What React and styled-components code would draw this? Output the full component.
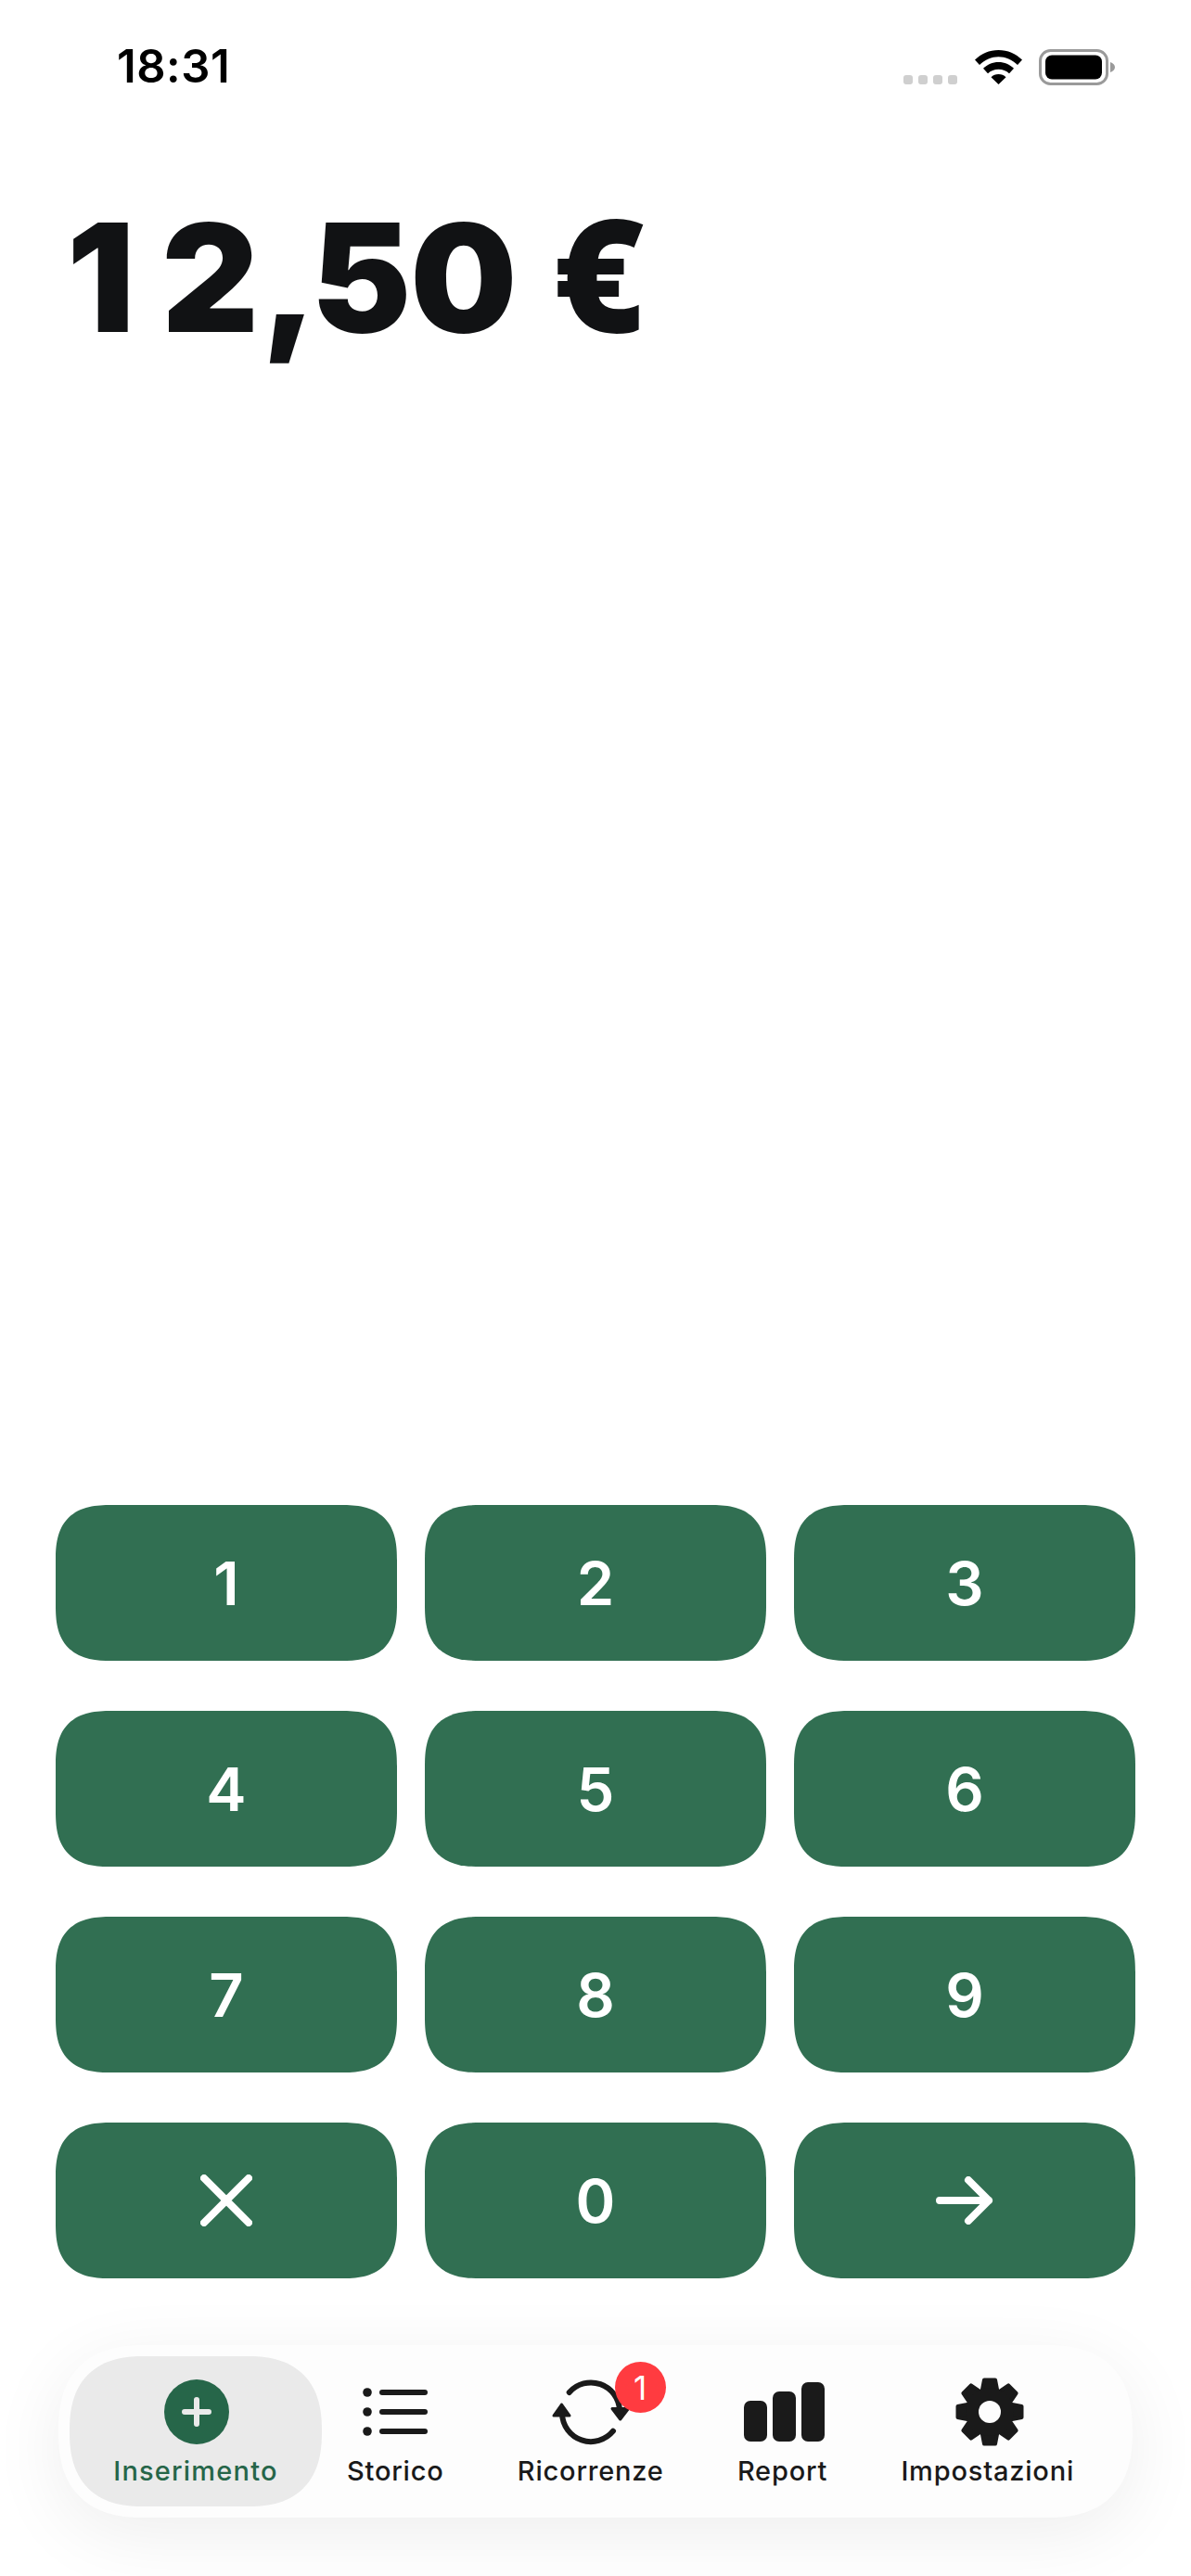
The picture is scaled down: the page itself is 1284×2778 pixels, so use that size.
import React from "react";
import styled, { createGlobalStyle } from "styled-components";

const GREEN = "#316f52";
const DARK = "#1a1a1a";

const GlobalStyle = createGlobalStyle`
  html, body {
    margin: 0;
    padding: 0;
    background: #fff;
    font-family: Inter, "Noto Sans", sans-serif;
    font-optical-sizing: none;
  }
`;

const Screen = styled.div`
  width: 1284px;
  height: 2778px;
  display: flex;
  flex-direction: column;
  overflow: hidden;
  background: #fff;
`;

const StatusBar = styled.div`
  height: 52px;
  padding: 46px 82px 0 126px;
  display: flex;
  align-items: center;
  justify-content: space-between;
`;

const Time = styled.span`
  font-size: 49px;
  font-weight: 600;
  line-height: 44px;
  letter-spacing: 0.5px;
  color: #000;
`;

const StatusIcons = styled.div`
  display: flex;
  align-items: flex-end;
  gap: 18px;
`;

const SignalDots = styled.div`
  display: flex;
  gap: 6px;
  margin-right: 1px;
  margin-bottom: 1px;
`;

const SignalDot = styled.i`
  width: 10px;
  height: 10px;
  border-radius: 3px;
  background: #cfcfcf;
`;

const Amount = styled.div`
  margin-top: 113px;
  padding-left: 72px;
  font-size: 162px;
  font-weight: 900;
  font-variation-settings: "opsz" 14;
  line-height: 164px;
  white-space: pre;
  color: #111214;
`;

const Glyph = styled.span`
  letter-spacing: ${(p) => p.$track}px;
`;

const Euro = styled.span`
  font-family: "Noto Sans", sans-serif;
  font-size: 168px;
  font-variation-settings: normal;
`;

const Keypad = styled.div`
  margin-top: auto;
  padding: 0 60px;
  display: grid;
  grid-template-columns: repeat(3, 368px);
  grid-auto-rows: 168px;
  gap: 54px 30px;
`;

const Key = styled.button`
  border: 0;
  padding: 0;
  border-radius: 50px;
  background: ${GREEN};
  color: #fff;
  font-family: inherit;
  font-optical-sizing: none;
  font-size: 65px;
  font-weight: 600;
  display: flex;
  align-items: center;
  justify-content: center;
  @supports (corner-shape: squircle) {
    border-radius: 60px;
    corner-shape: superellipse(1.4);
  }
`;

const NavBar = styled.nav`
  margin: 72px 63px 63px;
  height: 186px;
  box-sizing: border-box;
  padding: 12px 63px 12px 12px;
  display: flex;
  gap: 27px;
  border-radius: 88px;
  background: #fdfdfd;
  box-shadow: 0 18px 80px rgba(0, 0, 0, 0.07);
  @supports (corner-shape: squircle) {
    border-radius: 93px;
    corner-shape: superellipse(1.3);
  }
`;

const NavRest = styled.div`
  flex: 1;
  display: flex;
  justify-content: space-between;
`;

const NavItem = styled.div`
  position: relative;
  display: flex;
  flex-direction: column;
  align-items: center;
  padding-top: 18px;
  width: ${(p) => (p.$active ? "272px" : "auto")};
  border-radius: 76px;
  background: ${(p) => (p.$active ? "#eaeaea" : "transparent")};
  color: ${(p) => (p.$active ? "#266649" : DARK)};
  @supports (corner-shape: squircle) {
    border-radius: 81px;
    corner-shape: superellipse(1.3);
  }
`;

const NavIcon = styled.div`
  height: 84px;
  width: 90px;
  display: flex;
  align-items: center;
  justify-content: center;
  transform: translateX(${(p) => p.$nudge || 0}px);
`;

const NavLabel = styled.span`
  margin-top: 4px;
  font-size: 29px;
  font-weight: 500;
  line-height: 36px;
  letter-spacing: ${(p) => (p.$active ? 1.2 : 0.8)}px;
  white-space: nowrap;
`;

const Badge = styled.span`
  position: absolute;
  top: 6px;
  right: -2px;
  width: 55px;
  height: 55px;
  border-radius: 50%;
  background: #ff3b40;
  color: #fff;
  font-size: 35px;
  font-weight: 400;
  display: flex;
  align-items: center;
  justify-content: center;
`;

const KEYS = ["1", "2", "3", "4", "5", "6", "7", "8", "9"];

// tracking after each glyph, the amount is not evenly spaced
const AMOUNT_GLYPHS = [
  ["1", 29],
  ["2", 3],
  [",", -7],
  ["5", -1],
  ["0", 5],
  [" ", 2],
];

const Wifi = () => (
  <svg width="51" height="37" viewBox="0 0 51 37" style={{ marginBottom: 1 }}>
    <path d="M25.5 0C15.5 0 7 4 0 10.5l5 5.5C11 10.5 18 7.2 25.5 7.2S40 10.5 46 16l5-5.5C44 4 35.5 0 25.5 0Z" />
    <path d="M25.5 13c-6.5 0-12 2.5-16.5 6.8l5 5.5c3-2.8 7-4.5 11.5-4.5s8.5 1.7 11.5 4.5l5-5.5C37.5 15.5 32 13 25.5 13Z" />
    <path d="M25.5 26c-3.2 0-5.8 1.2-8 3.2l8 7.8 8-7.8c-2.2-2-4.8-3.2-8-3.2Z" />
  </svg>
);

const Battery = () => (
  <svg width="82" height="39" viewBox="0 0 82 39">
    <rect x="1.5" y="1.5" width="72" height="36" rx="11" fill="#fff" stroke="#9a9a9a" strokeWidth="3" />
    <rect x="7" y="6.5" width="61" height="26" rx="7" fill="#000" />
    <path d="M77 14c3 1 5 3 5 5.5S80 24 77 25Z" fill="#9a9a9a" />
  </svg>
);

const CloseIcon = () => (
  <svg width="56" height="56" viewBox="0 0 56 56" fill="none" stroke="#fff" strokeWidth="8" strokeLinecap="round">
    <path d="M4 4l48 48M52 4L4 52" />
  </svg>
);

const ArrowIcon = () => (
  <svg width="64" height="52" viewBox="0 0 64 52" fill="none" stroke="#fff" strokeWidth="8" strokeLinecap="round" strokeLinejoin="round">
    <path d="M5 26h53M36 4l22 22-22 22" />
  </svg>
);

const PlusIcon = () => (
  <svg width="70" height="70" viewBox="0 0 70 70">
    <circle cx="35" cy="35" r="35" fill="#266649" />
    <path d="M35 22v26M22 35h26" stroke="#eaeaea" strokeWidth="6" strokeLinecap="round" />
  </svg>
);

const ListIcon = () => (
  <svg width="70" height="52" viewBox="0 0 70 52" fill={DARK}>
    <circle cx="5" cy="5" r="4.8" />
    <circle cx="5" cy="26" r="4.8" />
    <circle cx="5" cy="47" r="4.8" />
    <rect x="18" y="2" width="52" height="6" rx="3" />
    <rect x="18" y="23" width="52" height="6" rx="3" />
    <rect x="18" y="44" width="52" height="6" rx="3" />
  </svg>
);

const RefreshIcon = () => (
  <svg width="90" height="72" viewBox="0 0 90 72" fill="none" stroke={DARK} strokeWidth="6" strokeLinecap="round">
    <path d="M21.7 15A31 31 0 0 1 76 34" />
    <path d="M69 56.7A31 31 0 0 1 14 38" />
    <path d="M13.5 28L5 40h17Z" fill={DARK} strokeWidth="3" strokeLinejoin="round" />
    <path d="M76.7 44L68 32.5h17.5Z" fill={DARK} strokeWidth="3" strokeLinejoin="round" />
  </svg>
);

const ChartIcon = () => (
  <svg width="87" height="64" viewBox="0 0 87 64" fill={DARK}>
    <rect x="0" y="20" width="25" height="44" rx="7" />
    <rect x="31" y="10" width="25" height="54" rx="7" />
    <rect x="62" y="0" width="25" height="64" rx="7" />
  </svg>
);

const GearIcon = () => {
  const teeth = Array.from({ length: 8 }, (_, i) => i * 45);
  return (
    <svg width="74" height="74" viewBox="0 0 74 74">
      <g fill={DARK}>
        {teeth.map((a) => (
          <path
            key={a}
            d="M31 2.5h12l2.5 13h-17Z"
            transform={`rotate(${a} 37 37)`}
            stroke={DARK}
            strokeWidth="4"
            strokeLinejoin="round"
          />
        ))}
        <circle cx="37" cy="37" r="26" />
      </g>
      <circle cx="37" cy="37" r="12" fill="#fdfdfd" />
    </svg>
  );
};

export default function App() {
  return (
    <Screen>
      <GlobalStyle />
      <StatusBar>
        <Time>18:31</Time>
        <StatusIcons>
          <SignalDots>
            <SignalDot />
            <SignalDot />
            <SignalDot />
            <SignalDot />
          </SignalDots>
          <Wifi />
          <Battery />
        </StatusIcons>
      </StatusBar>
      <Amount>
        {AMOUNT_GLYPHS.map(([g, track], i) => (
          <Glyph key={i} $track={track}>
            {g}
          </Glyph>
        ))}
        <Euro>€</Euro>
      </Amount>
      <Keypad>
        {KEYS.map((k) => (
          <Key key={k}>{k}</Key>
        ))}
        <Key aria-label="Cancella">
          <CloseIcon />
        </Key>
        <Key>0</Key>
        <Key aria-label="Avanti">
          <ArrowIcon />
        </Key>
      </Keypad>
      <NavBar>
        <NavItem $active>
          <NavIcon $nudge={1}>
            <PlusIcon />
          </NavIcon>
          <NavLabel $active>Inserimento</NavLabel>
        </NavItem>
        <NavRest>
          <NavItem>
            <NavIcon>
              <ListIcon />
            </NavIcon>
            <NavLabel>Storico</NavLabel>
          </NavItem>
          <NavItem>
            <NavIcon>
              <RefreshIcon />
            </NavIcon>
            <NavLabel>Ricorrenze</NavLabel>
            <Badge>1</Badge>
          </NavItem>
          <NavItem>
            <NavIcon $nudge={2}>
              <ChartIcon />
            </NavIcon>
            <NavLabel>Report</NavLabel>
          </NavItem>
          <NavItem>
            <NavIcon $nudge={2}>
              <GearIcon />
            </NavIcon>
            <NavLabel>Impostazioni</NavLabel>
          </NavItem>
        </NavRest>
      </NavBar>
    </Screen>
  );
}
